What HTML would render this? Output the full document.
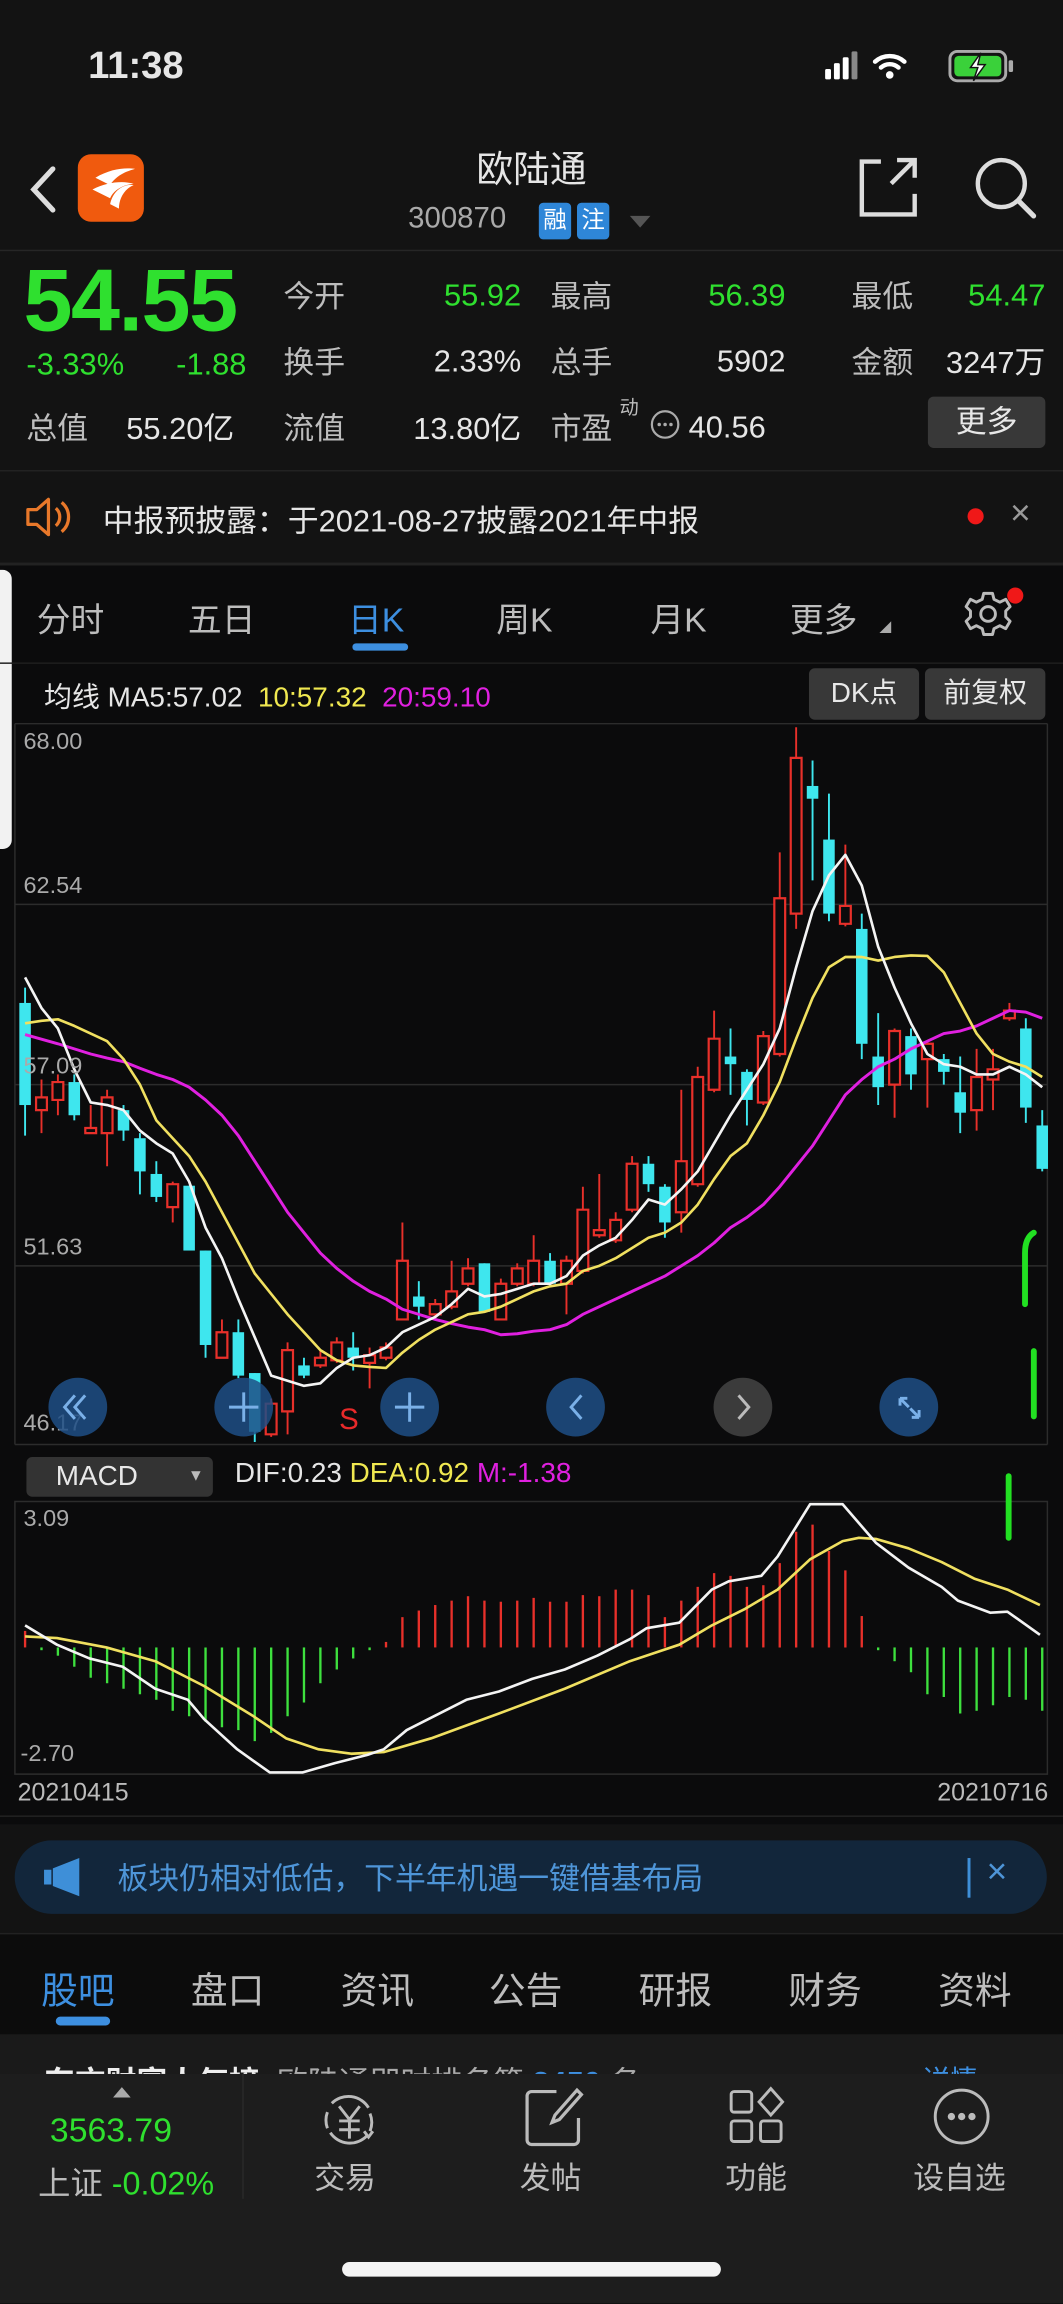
<!DOCTYPE html>
<html><head><meta charset="utf-8">
<style>
*{margin:0;padding:0;box-sizing:border-box}
html,body{width:1063px;height:2303px;overflow:hidden;background:#111}
.p{position:absolute;left:0;top:0;width:724px;height:1568px;transform:scale(1.4682,1.4688);transform-origin:0 0;background:#131313;font-family:"Liberation Sans","Noto Sans CJK SC",sans-serif;color:#ddd}
.a{position:absolute;white-space:nowrap}
.g{color:#2fe02f}.w{color:#e6e6e6}.l{color:#bdbdbd}
.n{margin-top:4px}
.hl{position:absolute;left:0;width:724px;height:1px;background:#2a2a2a}
.btn{position:absolute;background:#383838;border-radius:4px;color:#e8e8e8;text-align:center}
.circ{position:absolute;width:40px;height:40px;border-radius:50%;background:#1f4f86;opacity:.85}
</style></head><body>
<div class="p">
<!-- status bar -->
<div class="a w" style="left:60px;top:29px;font-size:26px;font-weight:bold">11:38</div>
<svg class="a" style="left:560px;top:33px" width="135" height="26" viewBox="0 0 135 26">
<rect x="2" y="14" width="4" height="7" rx="1" fill="#fff"/><rect x="8" y="10" width="4" height="11" rx="1" fill="#fff"/><rect x="14" y="6" width="4" height="15" rx="1" fill="#fff"/><rect x="20" y="2" width="4" height="19" rx="1" fill="#888"/>
<path d="M36 9a15 15 0 0 1 20 0M40 13a9 9 0 0 1 12 0" stroke="#fff" stroke-width="3" fill="none" stroke-linecap="round"/><circle cx="46" cy="18" r="2.6" fill="#fff"/>
<rect x="87" y="2" width="38" height="20" rx="5" fill="none" stroke="#aaa" stroke-width="2"/><rect x="90" y="5" width="32" height="14" rx="3" fill="#3ad13a"/><rect x="127" y="8" width="3" height="8" rx="1" fill="#aaa"/>
<path d="M108 3l-7 10h5l-3 9 8-11h-5z" fill="#fff" stroke="#131313" stroke-width="1"/>
</svg>
<!-- header -->
<svg class="a" style="left:18px;top:112px" width="22" height="34"><path d="M18 3L5 17l13 14" stroke="#ddd" stroke-width="3.5" fill="none" stroke-linecap="round"/></svg>
<div class="a" style="left:53px;top:105px;width:45px;height:46px;border-radius:9px;background:#f05a0e"></div>
<svg class="a" style="left:53px;top:105px" width="45" height="46"><path d="M12 16c10-6 20-7 27-6-8 2-14 6-17 11zM10 24c10-5 20-6 28-4-8 1-14 5-16 10zM22 34c2-10 10-14 16-13-7 3-10 10-10 16z" fill="#fff"/></svg>
<div class="a w" style="left:0;width:724px;text-align:center;top:96px;font-size:25px">欧陆通</div>
<div class="a" style="left:278px;top:138px;font-size:20px;color:#aaa">300870</div>
<div class="a" style="left:367px;top:138px;width:22px;height:25px;background:#2e86d8;border-radius:3px;font-size:16px;color:#fff;text-align:center;line-height:25px">融</div>
<div class="a" style="left:393px;top:138px;width:22px;height:25px;background:#2e86d8;border-radius:3px;font-size:16px;color:#fff;text-align:center;line-height:25px">注</div>
<svg class="a" style="left:428px;top:146px" width="16" height="10"><path d="M1 1h14L8 9z" fill="#555"/></svg>
<svg class="a" style="left:583px;top:105px" width="45" height="44"><path d="M17 5H4v36h36V27M24 20L40 4M28 4h12v12" stroke="#ddd" stroke-width="3" fill="none"/></svg>
<svg class="a" style="left:662px;top:105px" width="46" height="46"><circle cx="20" cy="20" r="16" stroke="#ddd" stroke-width="3" fill="none"/><path d="M32 32l10 10" stroke="#ddd" stroke-width="3.5" stroke-linecap="round"/></svg>
<div class="hl" style="top:170px;background:#262626"></div>
<!-- quote -->
<div class="a g" style="left:16px;top:170px;font-size:60px;font-weight:bold;letter-spacing:-1px">54.55</div>
<div class="a g" style="left:18px;top:237px;font-size:21px">-3.33%</div>
<div class="a g" style="left:120px;top:237px;font-size:21px">-1.88</div>
<div class="a l" style="left:193px;top:186px;font-size:21px">今开</div><div class="a g n" style="right:369px;top:186px;font-size:21px">55.92</div>
<div class="a l" style="left:375px;top:186px;font-size:21px">最高</div><div class="a g n" style="right:189px;top:186px;font-size:21px">56.39</div>
<div class="a l" style="left:580px;top:186px;font-size:21px">最低</div><div class="a g n" style="right:12px;top:186px;font-size:21px">54.47</div>
<div class="a l" style="left:193px;top:231px;font-size:21px">换手</div><div class="a w n" style="right:369px;top:231px;font-size:21px">2.33%</div>
<div class="a l" style="left:375px;top:231px;font-size:21px">总手</div><div class="a w n" style="right:189px;top:231px;font-size:21px">5902</div>
<div class="a l" style="left:580px;top:231px;font-size:21px">金额</div><div class="a w" style="right:12px;top:231px;font-size:21px">3247万</div>
<div class="a l" style="left:18px;top:276px;font-size:21px">总值</div><div class="a w" style="left:86px;top:276px;font-size:21px">55.20亿</div>
<div class="a l" style="left:193px;top:276px;font-size:21px">流值</div><div class="a w" style="right:369px;top:276px;font-size:21px">13.80亿</div>
<div class="a l" style="left:375px;top:276px;font-size:21px">市盈</div><div class="a l" style="left:422px;top:267px;font-size:13px">动</div>
<svg class="a" style="left:442px;top:278px" width="22" height="22"><circle cx="11" cy="11" r="9" stroke="#aaa" stroke-width="1.5" fill="none"/><circle cx="7" cy="11" r="1.2" fill="#aaa"/><circle cx="11" cy="11" r="1.2" fill="#aaa"/><circle cx="15" cy="11" r="1.2" fill="#aaa"/></svg>
<div class="a w n" style="left:469px;top:276px;font-size:21px">40.56</div>
<div class="btn" style="left:632px;top:270px;width:80px;height:35px;line-height:35px;font-size:21px">更多</div>
<div class="hl" style="top:320px;background:#222"></div>
<svg class="a" style="left:16px;top:337px" width="34" height="30"><path d="M3 10h6l8-7v24l-8-7H3z" stroke="#e8782a" stroke-width="2.2" fill="none" stroke-linejoin="round"/><path d="M22 9a8 8 0 0 1 0 12M26 5a13 13 0 0 1 0 20" stroke="#e8782a" stroke-width="2.2" fill="none"/></svg>
<div class="a w" style="left:70px;top:339px;font-size:21px">中报预披露：于2021-08-27披露2021年中报</div>
<div class="a" style="left:659px;top:346px;width:11px;height:11px;border-radius:50%;background:#f01818"></div>
<div class="a" style="left:688px;top:336px;font-size:24px;color:#999">×</div>
<!-- chart area -->
<div class="a" style="left:0;top:384px;width:724px;height:858px;background:#0b0b0c"></div>
<div class="hl" style="top:383px;background:#222;height:2px"></div>
<div class="a" style="left:0;top:388px;width:8px;height:190px;background:#f2f2f2;border-radius:0 6px 6px 0"></div>
<div class="a l" style="left:25px;top:403px;font-size:23px">分时</div>
<div class="a l" style="left:128px;top:403px;font-size:23px">五日</div>
<div class="a" style="left:237px;top:403px;font-size:23px;color:#3d8fe0">日K</div>
<div class="a" style="left:240px;top:438px;width:38px;height:5px;border-radius:3px;background:#3d8fe0"></div>
<div class="a l" style="left:338px;top:403px;font-size:23px">周K</div>
<div class="a l" style="left:443px;top:403px;font-size:23px">月K</div>
<div class="a l" style="left:538px;top:403px;font-size:23px">更多</div>
<svg class="a" style="left:598px;top:422px" width="10" height="10"><path d="M9 1v8H1z" fill="#aaa"/></svg>
<svg class="a" style="left:656px;top:401px" width="34" height="34"><path d="M14 3h6l1 4 4 2 4-2 3 5-3 3v4l3 3-3 5-4-2-4 2-1 4h-6l-1-4-4-2-4 2-3-5 3-3v-4l-3-3 3-5 4 2 4-2z" stroke="#bbb" stroke-width="2" fill="none" stroke-linejoin="round"/><circle cx="17" cy="17" r="5" stroke="#bbb" stroke-width="2" fill="none"/></svg>
<div class="a" style="left:686px;top:400px;width:11px;height:11px;border-radius:50%;background:#f01818"></div>
<div class="hl" style="top:451px;background:#1e1e1e"></div>
<div class="a" style="left:30px;top:460px;font-size:19px;color:#e6e6e6">均线 MA5:57.02 <span style="color:#f0e850">&nbsp;10:57.32</span> <span style="color:#e020e0">&nbsp;20:59.10</span></div>
<div class="btn" style="left:551px;top:455px;width:75px;height:35px;line-height:35px;font-size:19px">DK点</div>
<div class="btn" style="left:630px;top:455px;width:82px;height:35px;line-height:35px;font-size:19px">前复权</div>
<svg class="a" style="left:0;top:442.8px" width="724" height="545" viewBox="0 0 1568 1568" preserveAspectRatio="none" id="k">
<g stroke="#2c2c2c" stroke-width="1" vector-effect="non-scaling-stroke">
<path d="M22 143H1545M22 497H1545M22 850H1545M22 1205H1545M22 1555H1545M22 143V1555M1545 143V1555" fill="none" vector-effect="non-scaling-stroke"/></g>
</svg>
<div class="a" style="left:16px;top:497px;font-size:16px;color:#aaa">68.00</div>
<div class="a" style="left:16px;top:595px;font-size:16px;color:#aaa">62.54</div>
<div class="a" style="left:16px;top:718px;font-size:16px;color:#aaa">57.09</div>
<div class="a" style="left:16px;top:841px;font-size:16px;color:#aaa">51.63</div>
<div class="a" style="left:16px;top:961px;font-size:16px;color:#aaa">46.17</div>
<div class="circ" style="left:33px;top:938px"></div>
<div class="circ" style="left:146px;top:938px"></div>
<div class="circ" style="left:259px;top:938px"></div>
<div class="circ" style="left:372px;top:938px"></div>
<div class="circ" style="left:486px;top:938px;background:#444"></div>
<div class="circ" style="left:599px;top:938px"></div>
<svg class="a" style="left:0;top:938px" width="724" height="40" fill="none" stroke="#7ab0e8" stroke-width="2">
<path d="M51 12l-7 8 7 8M58 12l-7 8 7 8"/><path d="M156 20h20M166 10v20"/><path d="M269 20h20M279 10v20"/><path d="M396 12l-7 8 7 8"/><path d="M503 12l7 8-7 8" stroke="#bbb"/><path d="M613 14l6 6M613 14v5M613 14h5M626 27l-6-6M626 27v-5M626 27h-5"/></svg>
<div class="a" style="left:231px;top:956px;font-size:20px;color:#e82a2a">S</div>
<!-- MACD -->
<div class="btn" style="left:18px;top:992px;width:127px;height:27px;line-height:27px;font-size:19px;background:#333;text-align:left;padding-left:20px">MACD <span style="font-size:11px;position:absolute;left:110px;color:#bbb">▼</span></div>
<div class="a" style="left:160px;top:993px;font-size:19px;color:#e6e6e6">DIF:0.23 <span style="color:#f0e850">DEA:0.92</span> <span style="color:#e020e0">M:-1.38</span></div>
<svg class="a" style="left:0;top:980.9px" width="724" height="588" viewBox="0 0 1568 1568" preserveAspectRatio="none" id="m">
<path d="M22 110H1545V605H22Z" fill="none" stroke="#2c2c2c" vector-effect="non-scaling-stroke"/>
</svg>
<div class="a" style="left:16px;top:1026px;font-size:16px;color:#aaa">3.09</div>
<div class="a" style="left:14px;top:1186px;font-size:16px;color:#aaa">-2.70</div>
<div class="a" style="left:12px;top:1211px;font-size:17px;color:#bbb">20210415</div>
<div class="a" style="right:10px;top:1211px;font-size:17px;color:#bbb">20210716</div>
<div class="hl" style="top:1236px;background:#222"></div>
<div class="a" style="left:10px;top:1253px;width:703px;height:50px;border-radius:25px;background:#12263b"></div>
<svg class="a" style="left:28px;top:1264px" width="32" height="28"><path d="M2 9h5v10H2zM8 8l18-7v26L8 20z" fill="#3e8fd8"/></svg>
<div class="a" style="left:80px;top:1263px;font-size:21px;color:#4e95d8">板块仍相对低估，下半年机遇一键借基布局</div>
<div class="a" style="left:659px;top:1265px;width:2px;height:27px;background:#3e8fd8"></div>
<div class="a" style="left:672px;top:1261px;font-size:24px;color:#4e95d8">×</div>
<div class="hl" style="top:1316px;background:#222"></div>
<div class="a" style="left:0;top:1317px;width:724px;height:68px;background:#0c0c0c"></div>
<div class="a" style="left:28px;top:1336px;font-size:25px;color:#3d8fe0">股吧</div>
<div class="a l" style="left:130px;top:1336px;font-size:25px">盘口</div>
<div class="a l" style="left:232px;top:1336px;font-size:25px">资讯</div>
<div class="a l" style="left:333px;top:1336px;font-size:25px">公告</div>
<div class="a l" style="left:435px;top:1336px;font-size:25px">研报</div>
<div class="a l" style="left:537px;top:1336px;font-size:25px">财务</div>
<div class="a l" style="left:639px;top:1336px;font-size:25px">资料</div>
<div class="a" style="left:38px;top:1373px;width:37px;height:6px;border-radius:3px;background:#3d8fe0"></div>
<div class="a" style="left:0;top:1385px;width:724px;height:27px;background:#1a1a1a;overflow:hidden">
<div class="a" style="left:30px;top:17px;font-size:21px;color:#eee;font-weight:bold">东方财富人气榜 <span style="font-weight:normal;color:#aaa">&nbsp;欧陆通即时排名第</span> <span style="color:#3d8fe0">2450</span> <span style="font-weight:normal;color:#aaa">名</span></div>
<div class="a" style="left:628px;top:17px;font-size:19px;color:#3d8fe0">详情»</div></div>
<div class="a" style="left:0;top:1412px;width:724px;height:156px;background:#1d1d1d"></div>
<div class="a" style="left:165px;top:1412px;width:1px;height:85px;background:#2a2a2a"></div>
<svg class="a" style="left:76px;top:1420px" width="14" height="9"><path d="M7 1l6 7H1z" fill="#aaa"/></svg>
<div class="a g" style="left:34px;top:1437px;font-size:23px">3563.79</div>
<div class="a" style="left:26px;top:1469px;font-size:22px;color:#bbb">上证 <span class="g">-0.02%</span></div>
<svg class="a" style="left:214px;top:1422px" width="48" height="44" fill="none" stroke="#bbb" stroke-width="2"><path d="M12 10a16 16 0 0 1 25 3M36 32a16 16 0 0 1-25-2M9 16a16 16 0 0 0 0 11M38 17a16 16 0 0 1 0 12"/><path d="M17 12l7 9 7-9M24 21v13M17 22h14M17 28h14"/><path d="M34 29l3 4 3-4"/></svg>
<div class="a l" style="left:214px;top:1467px;font-size:21px">交易</div>
<svg class="a" style="left:355px;top:1420px" width="44" height="44" fill="none" stroke="#bbb" stroke-width="2.2"><path d="M24 4H7a3 3 0 0 0-3 3v30a3 3 0 0 0 3 3h29a3 3 0 0 0 3-3V22"/><path d="M38 3l3 3-15 17-5 2 2-5z"/></svg>
<div class="a l" style="left:354px;top:1467px;font-size:21px">发帖</div>
<svg class="a" style="left:494px;top:1420px" width="44" height="44" fill="none" stroke="#bbb" stroke-width="2"><rect x="4" y="4" width="14" height="14" rx="2"/><rect x="4" y="24" width="14" height="14" rx="2"/><rect x="24" y="24" width="14" height="14" rx="2"/><path d="M31 2l8 9-8 9-8-9z"/></svg>
<div class="a l" style="left:494px;top:1467px;font-size:21px">功能</div>
<svg class="a" style="left:634px;top:1420px" width="44" height="44" fill="none" stroke="#bbb" stroke-width="2"><circle cx="21" cy="21" r="18"/><circle cx="14" cy="21" r="1.5" fill="#bbb"/><circle cx="21" cy="21" r="1.5" fill="#bbb"/><circle cx="28" cy="21" r="1.5" fill="#bbb"/></svg>
<div class="a l" style="left:622px;top:1467px;font-size:21px">设自选</div>
<div class="a" style="left:233px;top:1540px;width:258px;height:10px;border-radius:5px;background:#f4f4f4"></div>
<div class="a" style="left:685px;top:1003px;width:4px;height:46px;background:#22e022;border-radius:2px"></div>
</div>
<script>
var NS="http://www.w3.org/2000/svg";
function el(p,t,a){var e=document.createElementNS(NS,t);for(var k in a)e.setAttribute(k,a[k]);e.setAttribute("vector-effect","non-scaling-stroke");p.appendChild(e);return e;}
var K=document.getElementById("k");
var C=[[690,890,660,950,0],[875,900,840,945,1],[845,880,830,910,1],[845,910,830,920,0],[935,945,890,945,1],[875,945,860,1010,1],[900,940,890,960,0],[955,1020,945,1065,0],[1025,1070,1000,1080,0],[1045,1090,1040,1120,1],[1048,1175,1048,1175,0],[1175,1360,1175,1385,0],[1335,1385,1310,1385,1],[1335,1420,1310,1425,0],[1415,1530,1415,1550,0],[1475,1535,1465,1540,1],[1370,1490,1355,1535,1],[1400,1420,1385,1425,0],[1385,1400,1370,1405,1],[1355,1390,1345,1395,1],[1365,1385,1335,1410,0],[1380,1395,1365,1445,1],[1365,1385,1355,1390,1],[1195,1310,1120,1310,1],[1265,1285,1235,1310,0],[1280,1300,1270,1305,1],[1255,1285,1195,1290,1],[1210,1240,1190,1245,1],[1200,1295,1200,1295,0],[1240,1310,1230,1310,1],[1210,1240,1200,1245,1],[1195,1240,1145,1245,1],[1195,1240,1180,1245,0],[1195,1240,1185,1300,1],[1095,1215,1050,1220,1],[1135,1145,1025,1150,1],[1115,1155,1100,1160,1],[1005,1095,990,1100,1],[1005,1045,990,1060,0],[1050,1120,1045,1150,0],[1000,1100,860,1140,1],[835,1045,815,1050,1],[760,860,705,865,1],[795,810,740,870,0],[825,880,820,930,0],[755,885,745,890,1],[485,790,395,795,1],[210,515,150,545,1],[265,290,215,450,0],[370,515,280,530,0],[500,535,380,540,1],[545,770,515,800,0],[795,855,710,890,0],[745,850,740,915,1],[755,830,740,860,0],[770,800,765,895,1],[800,825,790,850,0],[865,905,795,945,0],[835,900,780,940,1],[820,840,780,900,1],[705,720,690,725,1],[740,895,720,925,0],[930,1015,900,1020,0]];
C.forEach(function(c,i){var x=37+24.2*i,col=c[4]?"#e8302a":"#3ee6ee";
el(K,"line",{x1:x,x2:x,y1:c[2],y2:c[3],stroke:col,"stroke-width":1.3});
if(c[4])el(K,"rect",{x:x-8,y:c[0],width:16,height:Math.max(c[1]-c[0],3),fill:"#0b0b0c",stroke:col,"stroke-width":1.5});
else el(K,"rect",{x:x-8.5,y:c[0],width:17,height:Math.max(c[1]-c[0],3),fill:col});});
function line(p,pts,col,w){el(p,"polyline",{points:pts,fill:"none",stroke:col,"stroke-width":w,"stroke-linejoin":"round"});}
var xs=function(i){return 37+24.2*i};
var m5=[640,700,740,820,885,890,900,940,965,985,1040,1130,1190,1270,1345,1420,1430,1440,1435,1405,1385,1380,1365,1335,1320,1305,1280,1250,1265,1260,1250,1240,1240,1225,1185,1165,1150,1115,1075,1085,1055,1020,965,910,860,810,740,620,510,440,400,460,580,660,730,790,810,815,830,830,815,830,855];
var m10=[730,725,722,735,750,765,800,850,920,955,990,1040,1100,1160,1220,1260,1300,1335,1370,1390,1400,1403,1405,1375,1350,1330,1315,1300,1295,1285,1270,1255,1245,1240,1215,1205,1190,1170,1150,1140,1120,1085,1035,990,965,910,845,760,680,620,600,600,607,600,597,598,630,690,750,790,805,815,835];
var m20=[752,761,770,780,790,798,805,818,830,840,855,880,910,950,1000,1050,1100,1140,1180,1210,1235,1255,1270,1290,1300,1310,1318,1325,1330,1340,1338,1333,1330,1320,1300,1285,1270,1255,1240,1225,1205,1185,1160,1130,1110,1085,1050,1010,970,920,870,840,815,800,780,765,750,745,735,720,705,708,720];
function pts(a){return a.map(function(v,i){return xs(i)+","+v}).join(" ")}
line(K,pts(m20),"#e020e0",2);line(K,pts(m10),"#f0e060",1.8);line(K,pts(m5),"#f4f4f4",1.8);
el(K,"path",{d:"M1525 1140Q1512 1150 1512 1180V1280",stroke:"#22e022","stroke-width":4,fill:"none","stroke-linecap":"round"});
el(K,"line",{x1:1525,x2:1525,y1:1372,y2:1500,stroke:"#22e022","stroke-width":4,"stroke-linecap":"round"});
var M=document.getElementById("m");
var B=[345,380,390,410,430,440,450,460,470,490,500,510,520,525,545,530,500,475,440,415,395,380,365,320,308,298,290,282,290,292,290,285,292,292,280,282,270,270,280,320,290,265,240,245,265,262,222,165,152,200,235,318,380,400,420,460,465,495,490,480,465,470,490];
B.forEach(function(v,i){var x=xs(i);el(M,"line",{x1:x,x2:x,y1:375,y2:v,stroke:v<375?"#e8302a":"#3ee03e","stroke-width":1.6});});
line(M,"37,355 84,358 157,375 229,400 301,445 374,500 422,540 470,560 518,568 566,565 636,540 736,495 833,450 929,400 1002,370 1050,335 1099,305 1147,270 1195,215 1243,182 1267,176 1292,178 1340,195 1389,220 1437,250 1486,270 1534,298","#f0e060",1.8);
line(M,"37,335 84,370 132,395 181,410 229,450 277,470 301,505 350,560 398,602 446,602 494,585 542,570 566,560 600,525 688,470 736,455 785,432 833,415 881,390 929,360 954,340 1002,330 1050,270 1075,255 1123,245 1147,210 1195,115 1243,115 1292,185 1340,230 1389,265 1413,290 1461,312 1486,310 1534,352","#f4f4f4",1.8);
</script>
</body></html>
